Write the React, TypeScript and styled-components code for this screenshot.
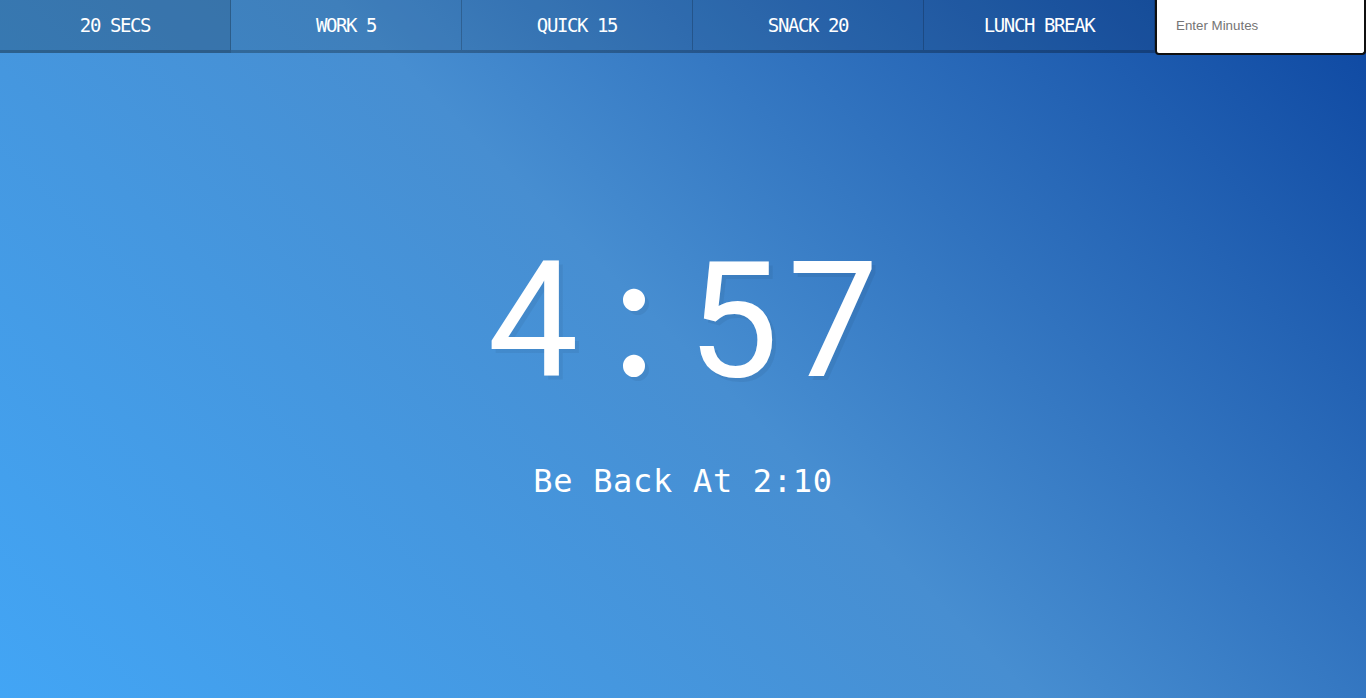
import styled, { createGlobalStyle } from "styled-components"

const GlobalStyle = createGlobalStyle`
    html{
        box-sizing: border-box;
        font-size: 10px;
        background: linear-gradient(45deg, #42a5f5 0%, #478ed1 50%, #0d47a1 100%);
        min-height: 100%;
    }
    *, *::before, *::after{
        box-sizing: inherit;
    }
    body{
        margin: 0;
        text-align: center;
        font-family: "DejaVu Sans Mono", monospace;
    }
`

const buttons = ["20 Secs", "Work 5", "Quick 15", "Snack 20", "Lunch Break"]
const timeLeft = "4:57"

// COMPONENT // // COMPONENT // // COMPONENT //
const App = ()=>{
    return(
        <>
            <GlobalStyle />
            <Timer>
                <Controls>
                    {buttons.map(b => <TimerButton key={b}>{b}</TimerButton>)}
                    <MinutesForm onSubmit={e => e.preventDefault()}>
                        <MinutesInput type="text" name="minutes" placeholder="Enter Minutes" />
                    </MinutesForm>
                </Controls>
                <Display>
                    <TimeLeft>
                        {timeLeft.split("").map((c, i) => <Cell key={i} $colon={c === ":"}>{c}</Cell>)}
                    </TimeLeft>
                    <EndTime>Be Back At 2:10</EndTime>
                </Display>
            </Timer>
        </>
    )
}

export default App

// STYLESHEET // // STYLESHEET // // STYLESHEET //
const Timer = styled.div`
    display: flex;
    min-height: 100vh;
    flex-direction: column;
`

const Controls = styled.div`
    display: flex;
    align-items: flex-start;
    height: 53px;
`

const TimerButton = styled.button`
    flex: 1;
    height: 53px;
    border: 0;
    cursor: pointer;
    color: white;
    font-family: "DejaVu Sans Mono", monospace;
    font-size: 19px;
    letter-spacing: -1.4px;
    text-transform: uppercase;
    background: rgba(0,0,0,0.1);
    border-bottom: 3px solid rgba(0,0,0,0.2);
    border-right: 1px solid rgba(0,0,0,0.2);
    padding: 0 10px;
    &:hover{
        background: rgba(0,0,0,0.2);
    }
`

const MinutesForm = styled.form`
    flex: 0 0 211px;
    display: flex;
    height: 55px;
    position: relative;
    z-index: 1;
`

const MinutesInput = styled.input`
    flex: 1;
    width: 100%;
    border: 2px solid #101010;
    border-top: 0;
    border-radius: 0 0 4px 4px;
    box-shadow: inset 0 0 0 1px #fff;
    padding: 0 19px 2px;
    font-family: Arial, "Liberation Sans", sans-serif;
    font-size: 13.33px;
    color: #222;
    background: white;
    outline: none;
    &::placeholder{
        color: #757575;
    }
`

const Display = styled.div`
    flex: 1;
    display: flex;
    flex-direction: column;
    align-items: center;
    justify-content: center;
    color: white;
    padding-bottom: 39px;
`

const TimeLeft = styled.h1`
    display: flex;
    align-items: baseline;
    margin: 0;
    font-family: Roboto, "Noto Sans", sans-serif;
    font-weight: 400;
    font-size: 162px;
    line-height: 200px;
    text-shadow: 4px 4px 0 rgba(0,0,0,0.05);
`

const Cell = styled.span<{ $colon?: boolean }>`
    width: 100px;
    text-align: center;
    ${({ $colon }) => $colon && `
        font-family: Lato, Roboto, sans-serif;
        font-size: 176px;
        padding-left: 2px;
    `}
`

const EndTime = styled.p`
    margin: 36px 0 0;
    font-size: 32px;
    line-height: 48px;
    letter-spacing: 0.7px;
`
